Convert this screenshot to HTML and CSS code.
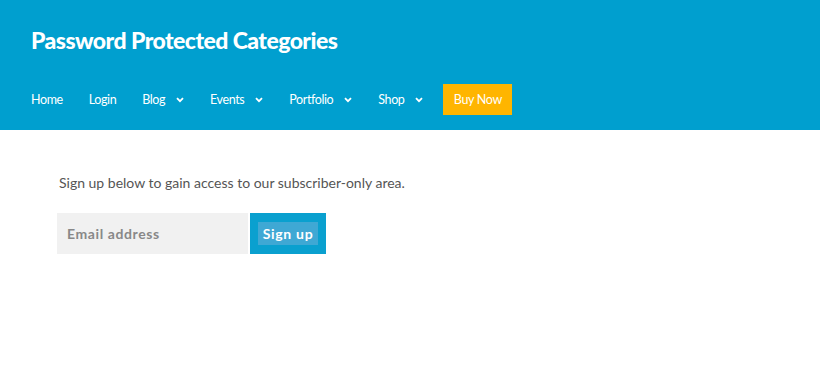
FILE: index.html
```html
<!DOCTYPE html>
<html lang="en">
<head>
    <meta charset="UTF-8">
    <title>Password Protected Categories</title>
    <link rel="stylesheet" href="styles.css">
</head>
<body>
    <header class="site-header">
        <div class="site-title">Password Protected Categories</div>
        <nav class="main-nav">
            <a href="#" class="nav-item">Home</a>
            <a href="#" class="nav-item">Login</a>
            <a href="#" class="nav-item has-sub">Blog <span class="caret"><svg width="8" height="6" viewBox="0 0 8 6"><path d="M1 1.2 L4 4.2 L7 1.2" fill="none" stroke="#fff" stroke-width="1.8"/></svg></span></a>
            <a href="#" class="nav-item has-sub">Events <span class="caret"><svg width="8" height="6" viewBox="0 0 8 6"><path d="M1 1.2 L4 4.2 L7 1.2" fill="none" stroke="#fff" stroke-width="1.8"/></svg></span></a>
            <a href="#" class="nav-item has-sub">Portfolio <span class="caret"><svg width="8" height="6" viewBox="0 0 8 6"><path d="M1 1.2 L4 4.2 L7 1.2" fill="none" stroke="#fff" stroke-width="1.8"/></svg></span></a>
            <a href="#" class="nav-item has-sub last">Shop <span class="caret"><svg width="8" height="6" viewBox="0 0 8 6"><path d="M1 1.2 L4 4.2 L7 1.2" fill="none" stroke="#fff" stroke-width="1.8"/></svg></span></a>
            <a href="#" class="buy-now">Buy Now</a>
        </nav>
    </header>

    <main class="content">
        <p class="intro">Sign up below to gain access to our subscriber-only area.</p>
        <form class="signup">
            <input type="email" class="email" placeholder="Email address">
            <button type="button" class="signup-btn"><span>Sign up</span></button>
        </form>
    </main>
</body>
</html>
```

FILE: styles.css
```css
body {
    margin: 0;
    font-family: 'Lato', 'Liberation Sans', sans-serif;
    background: #fff;
}
.site-header {
    background: #009fcf;
    height: 130px;
    padding: 0 31px;
    box-sizing: border-box;
}
.site-title {
    color: #fff;
    font-weight: 900;
    font-size: 23px;
    letter-spacing: -0.55px;
    padding-top: 26px;
    line-height: 28px;
}
.main-nav {
    display: flex;
    align-items: center;
    margin-top: 30px;
}
.nav-item {
    color: #fff;
    text-decoration: none;
    font-size: 12.5px;
    letter-spacing: -0.4px;
    margin-right: 26px;
    display: flex;
    align-items: center;
}
.nav-item.last {
    margin-right: 20px;
}
.caret {
    margin-left: 11px;
    display: inline-flex;
}
.buy-now {
    background: #ffb500;
    color: #fff;
    text-decoration: none;
    font-size: 12.5px;
    letter-spacing: -0.3px;
    height: 31px;
    width: 69px;
    display: flex;
    align-items: center;
    justify-content: center;
}
.content {
    padding: 0 57px;
}
.intro {
    margin: 44px 0 0 2px;
    font-size: 14px;
    color: #555;
    letter-spacing: 0;
}
.signup {
    display: flex;
    margin-top: 22px;
}
.email {
    width: 191px;
    height: 41px;
    box-sizing: border-box;
    border: none;
    background: #f1f1f1;
    padding: 0 10px;
    font-family: inherit;
    font-size: 14px;
    font-weight: 700;
    letter-spacing: 0.6px;
    color: #888;
}
.email::placeholder {
    color: #888;
}
.signup-btn {
    margin-left: 2px;
    width: 76px;
    height: 41px;
    border: none;
    background: #0aa0cf;
    display: flex;
    align-items: center;
    justify-content: center;
    padding: 0;
    font-family: inherit;
}
.signup-btn span {
    background: #3fa8d4;
    color: #fff;
    font-size: 14px;
    font-weight: 700;
    letter-spacing: 0.7px;
    padding: 3px 5px;
}
```
